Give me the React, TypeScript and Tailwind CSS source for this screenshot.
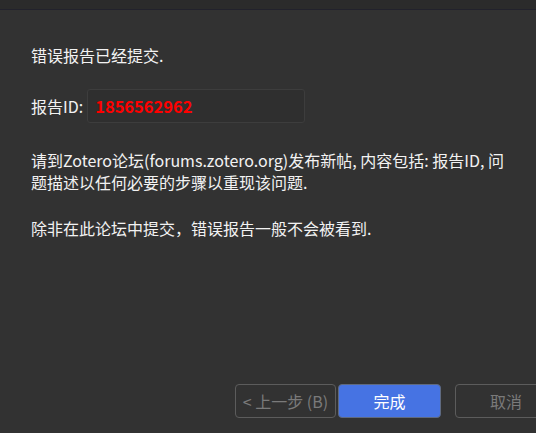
export default function App() {
  const font = { fontFamily: '"Noto Sans CJK SC", "Noto Sans", sans-serif' }
  return (
    <div
      className="w-[536px] h-[433px] overflow-hidden bg-[#323232] text-[#f2f2f2] flex flex-col"
      style={font}
    >
      <div className="h-[10px] shrink-0 bg-[#2b2b2b] border-b border-[#22222c]" />

      <div className="flex-1 pl-[31px] pr-[20px] pt-[34px] text-[16px] leading-[22px]">
        <p>错误报告已经提交.</p>

        <div className="mt-[23px] flex items-center gap-[4px]">
          <span>报告ID:</span>
          <div className="w-[218px] h-[34px] rounded-[3px] border border-[#3d3d3d] bg-[#2f2f2f] flex items-center px-[7px]">
            <span className="text-[#ff0000] font-bold text-[16.5px]">1856562962</span>
          </div>
        </div>

        <p className="mt-[26px]">
          请到Zotero论坛(forums.zotero.org)发布新帖, 内容包括: 报告ID, 问题描述以任何必要的步骤以重现该问题.
        </p>

        <p className="mt-[24px]">除非在此论坛中提交，错误报告一般不会被看到.</p>
      </div>

      <div className="flex justify-end gap-[2px] mr-[-21px] mb-[15px] text-[16px]">
        <button className="w-[101px] h-[34px] rounded-[4px] border border-[#5c5c5c] text-[#7a7a7a]">
          &lt; 上一步 (B)
        </button>
        <button className="w-[103px] h-[34px] rounded-[4px] border border-[#5f6a80] bg-[#4673e3] text-white">
          完成
        </button>
        <button className="ml-[12px] w-[102px] h-[34px] rounded-[4px] border border-[#5c5c5c] text-[#7a7a7a]">
          取消
        </button>
      </div>
    </div>
  )
}
